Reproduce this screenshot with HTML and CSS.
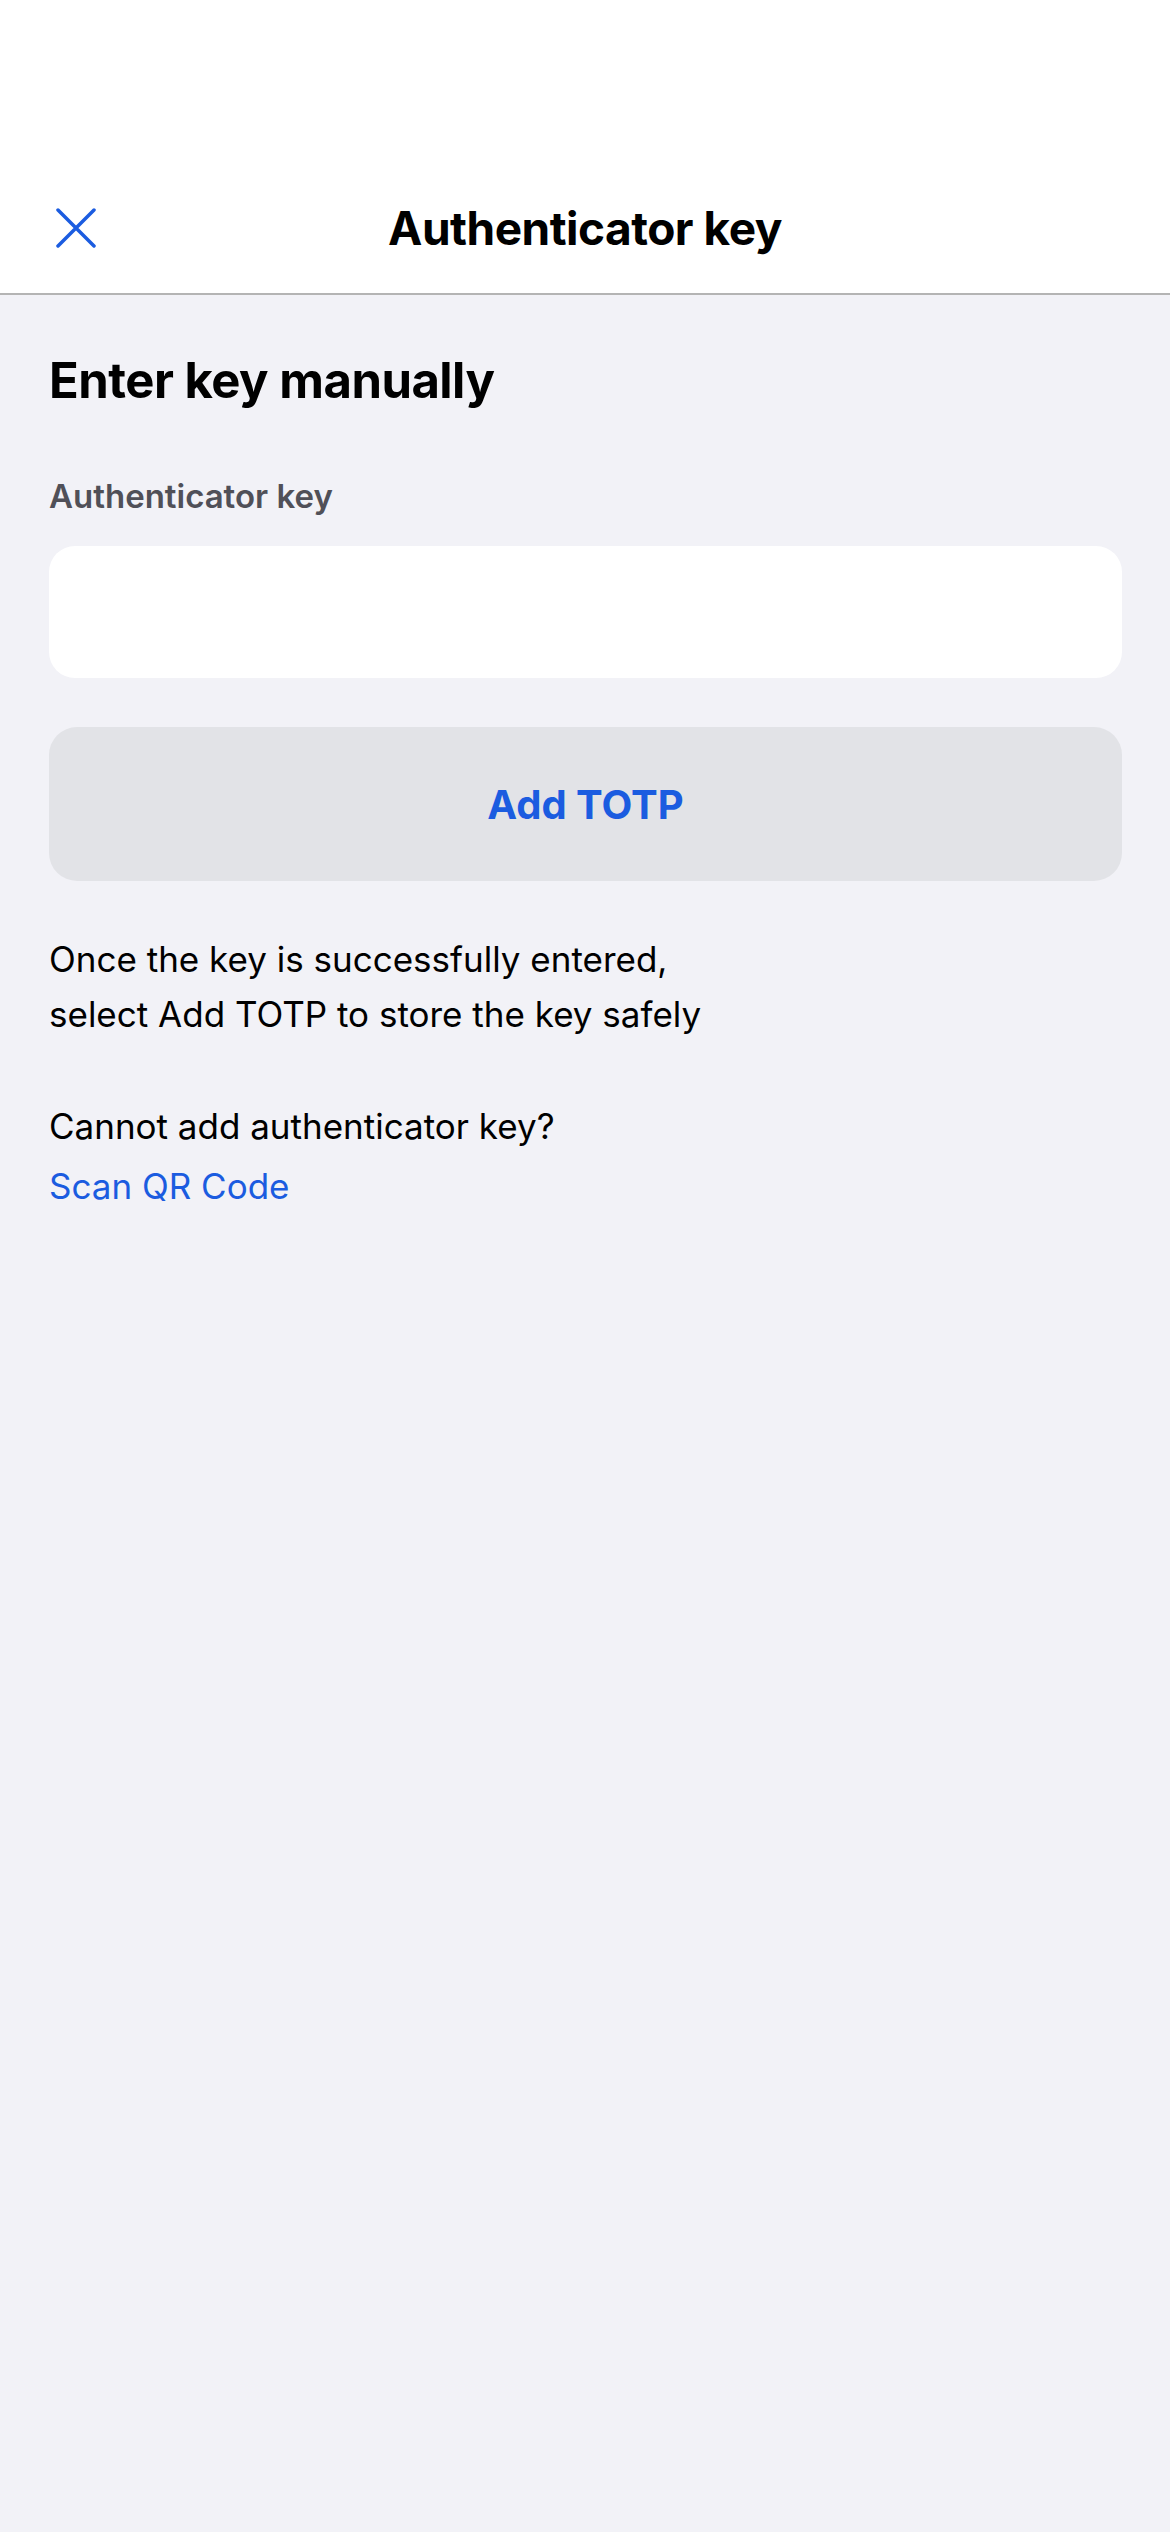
FILE: index.html
```html
<!DOCTYPE html>
<html lang="en">
<head>
<meta charset="utf-8">
<title>Authenticator key</title>
<link rel="stylesheet" href="styles.css">
</head>
<body>
<div class="screen">
  <header class="topbar">
    <div class="nav">
      <button class="close" aria-label="Close">
        <svg viewBox="0 0 40 40" width="40" height="40"><path d="M2 2 L38 38 M38 2 L2 38" stroke="#1b5ce0" stroke-width="3.5" stroke-linecap="round" fill="none"/></svg>
      </button>
      <h1 class="nav-title">Authenticator key</h1>
    </div>
  </header>
  <main class="content">
    <h2 class="heading">Enter key manually</h2>
    <label class="field-label" for="key">Authenticator key</label>
    <div class="input-box" id="key"></div>
    <button class="primary">Add TOTP</button>
    <p class="info">Once the key is successfully entered,<br>select Add TOTP to store the key safely</p>
    <p class="info help">Cannot add authenticator key?</p>
    <a class="link" href="#">Scan QR Code</a>
  </main>
</div>
</body>
</html>
```
FILE: styles.css
```css
* { box-sizing: border-box; }
html, body { margin: 0; padding: 0; }
body {
  font-family: Inter, "Noto Sans", sans-serif;
  background: #f2f2f7;
  color: #000;
}
.screen { min-height: 2532px; background: #f2f2f7; }
.topbar {
  background: #fff;
  height: 295px;
  border-bottom: 2px solid #b4b4b4;
  padding-top: 186px;
}
.nav {
  position: relative;
  height: 84px;
  display: flex;
  align-items: center;
  justify-content: center;
}
.close {
  position: absolute;
  left: 56px;
  top: 22px;
  width: 40px;
  height: 40px;
  padding: 0;
  border: 0;
  background: none;
}
.close svg { display: block; }
.nav-title {
  margin: 0;
  font-size: 46px;
  font-weight: 700;
  letter-spacing: -0.5px;
}
.content {
  padding: 0 48px 0 49px;
  display: flex;
  flex-direction: column;
}
.heading {
  margin: 56px 0 0;
  font-size: 49px;
  font-weight: 700;
  line-height: 60px;
  letter-spacing: -0.5px;
}
.field-label {
  margin-top: 65px;
  font-size: 33px;
  font-weight: 600;
  color: #505058;
  line-height: 40px;
}
.input-box {
  margin-top: 30px;
  height: 132px;
  background: #fff;
  border-radius: 26px;
}
.primary {
  margin-top: 49px;
  height: 154px;
  border: 0;
  border-radius: 28px;
  background: #e2e3e7;
  color: #1b5ce0;
  font-family: inherit;
  font-size: 40px;
  font-weight: 700;
}
.info {
  margin: 51px 0 0;
  font-size: 35px;
  line-height: 55px;
}
.info.help { margin-top: 57px; }
.link {
  margin-top: 5px;
  font-size: 35px;
  line-height: 55px;
  color: #1b5ce0;
  text-decoration: none;
}
```
